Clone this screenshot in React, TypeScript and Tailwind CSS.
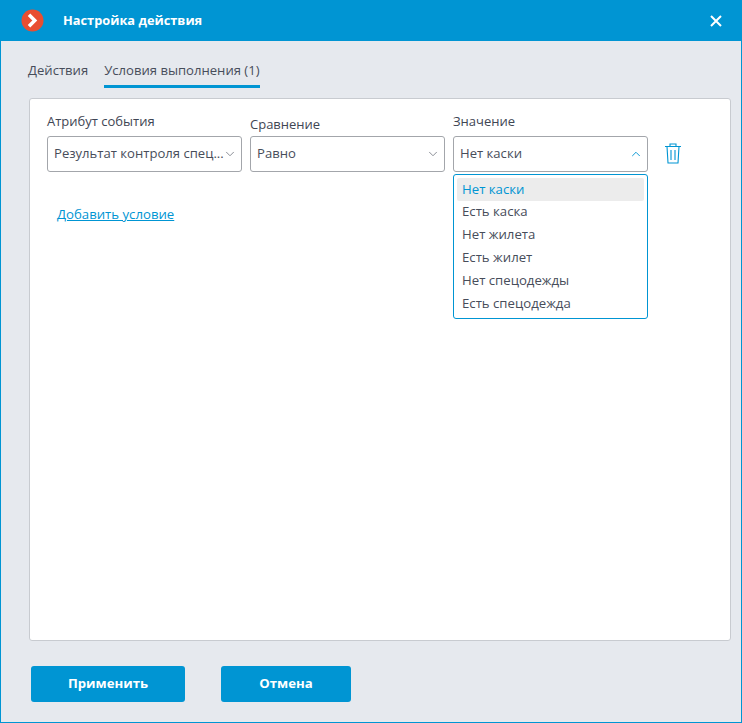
import { ChevronDown, ChevronUp } from "lucide-react";

const options = ["Нет каски", "Есть каска", "Нет жилета", "Есть жилет", "Нет спецодежды", "Есть спецодежда"];

function Field({ label, value, open, width, labelClass }: { label: string; value: string; open?: boolean; width: string; labelClass: string }) {
  return (
    <div className={`flex flex-col ${width}`}>
      <div className={`text-[13px] leading-[18px] text-[#3f4654] ${labelClass}`}>{label}</div>
      <div className="flex h-9 items-center justify-between rounded-[3px] border border-[#a3a6ab] bg-white pl-[6px] pr-[4px] text-[13.1px] text-[#474d5a]">
        <span className="truncate">{value}</span>
        {open ? (
          <ChevronUp className="-ml-[3px] h-[14px] w-[14px] shrink-0 text-[#0095d3]" strokeWidth={1.6} />
        ) : (
          <ChevronDown className="-ml-[3px] h-[14px] w-[14px] shrink-0 text-[#7a7f88]" strokeWidth={1.5} />
        )}
      </div>
    </div>
  );
}

export default function App() {
  return (
    <div className="flex h-[723px] w-[742px] flex-col border-x border-b border-[#0095d3] bg-[#e6e9ee] font-['Open_Sans',sans-serif]">
      <div className="-mx-px flex h-[41px] shrink-0 items-center bg-[#0095d3] pl-[21px] pr-[20px]">
        <svg width="23" height="23" viewBox="0 0 23 23">
          <circle cx="11.5" cy="11.5" r="11" fill="#e84e31" />
          <path d="M8 5.75 L13.75 11.5 L8 17.25" fill="none" stroke="#fff" strokeWidth="3.5" />
        </svg>
        <div className="ml-[19px] text-[12.8px] font-bold text-white">Настройка действия</div>
        <svg className="ml-auto" width="12" height="12" viewBox="0 0 12 12">
          <path d="M1 1 L11 11 M11 1 L1 11" stroke="#fff" strokeWidth="2" />
        </svg>
      </div>

      <div className="flex gap-4 pl-[27px] pt-[19px] text-[13.1px] text-[#474d5a]">
        <div className="h-[28px] leading-[20px]">Действия</div>
        <div className="h-[28px] border-b-[3px] border-[#0095d3] leading-[20px]">Условия выполнения (1)</div>
      </div>

      <div className="relative ml-[28px] mr-[10px] mt-[10px] h-[543px] rounded-[3px] border border-[#c8cbd0] bg-white pl-[17px] pt-[13px]">
        <div className="flex items-start gap-2">
          <Field label="Атрибут события" value="Результат контроля спец..." width="w-[195px]" labelClass="mb-[6px]" />
          <Field label="Сравнение" value="Равно" width="w-[195px]" labelClass="mt-[3px] mb-[3px]" />
          <div className="relative">
            <Field label="Значение" value="Нет каски" open width="w-[195px]" labelClass="mb-[6px]" />
            <div className="absolute left-0 top-[62px] h-[145px] w-[195px] rounded-[3px] border border-[#0095d3] bg-white pt-[3px] px-[3px] text-[13.2px] leading-[18px] text-[#474d5a]">
              {options.map((o, i) => (
                <div key={o} className={`flex h-[23px] items-center rounded-[2px] px-[5px] ${i === 0 ? "bg-[#ececec] pb-[2px] text-[#0095d3]" : "pb-[4px]"}`}>
                  {o}
                </div>
              ))}
            </div>
          </div>
          <svg className="ml-[8px] mt-[31px]" width="18" height="21" viewBox="0 0 18 21" fill="none" stroke="#0095d3" strokeWidth="1.1">
            <path d="M1 3.5 H17 M6 3.5 V1 H12 V3.5 M3 3.5 L4 20 H14 L15 3.5 M7 7 V17 M11 7 V17" />
          </svg>
        </div>
        <div className="ml-[10px] mt-[33px] text-[13.2px] text-[#0095d3] underline">Добавить условие</div>
      </div>

      <div className="flex gap-9 pl-[30px] pt-[25px]">
        <button className="h-9 w-[154px] rounded-[3px] bg-[#0095d3] text-[13.2px] font-bold text-white">Применить</button>
        <button className="h-9 w-[130px] rounded-[3px] bg-[#0095d3] text-[13.2px] font-bold text-white">Отмена</button>
      </div>
    </div>
  );
}
